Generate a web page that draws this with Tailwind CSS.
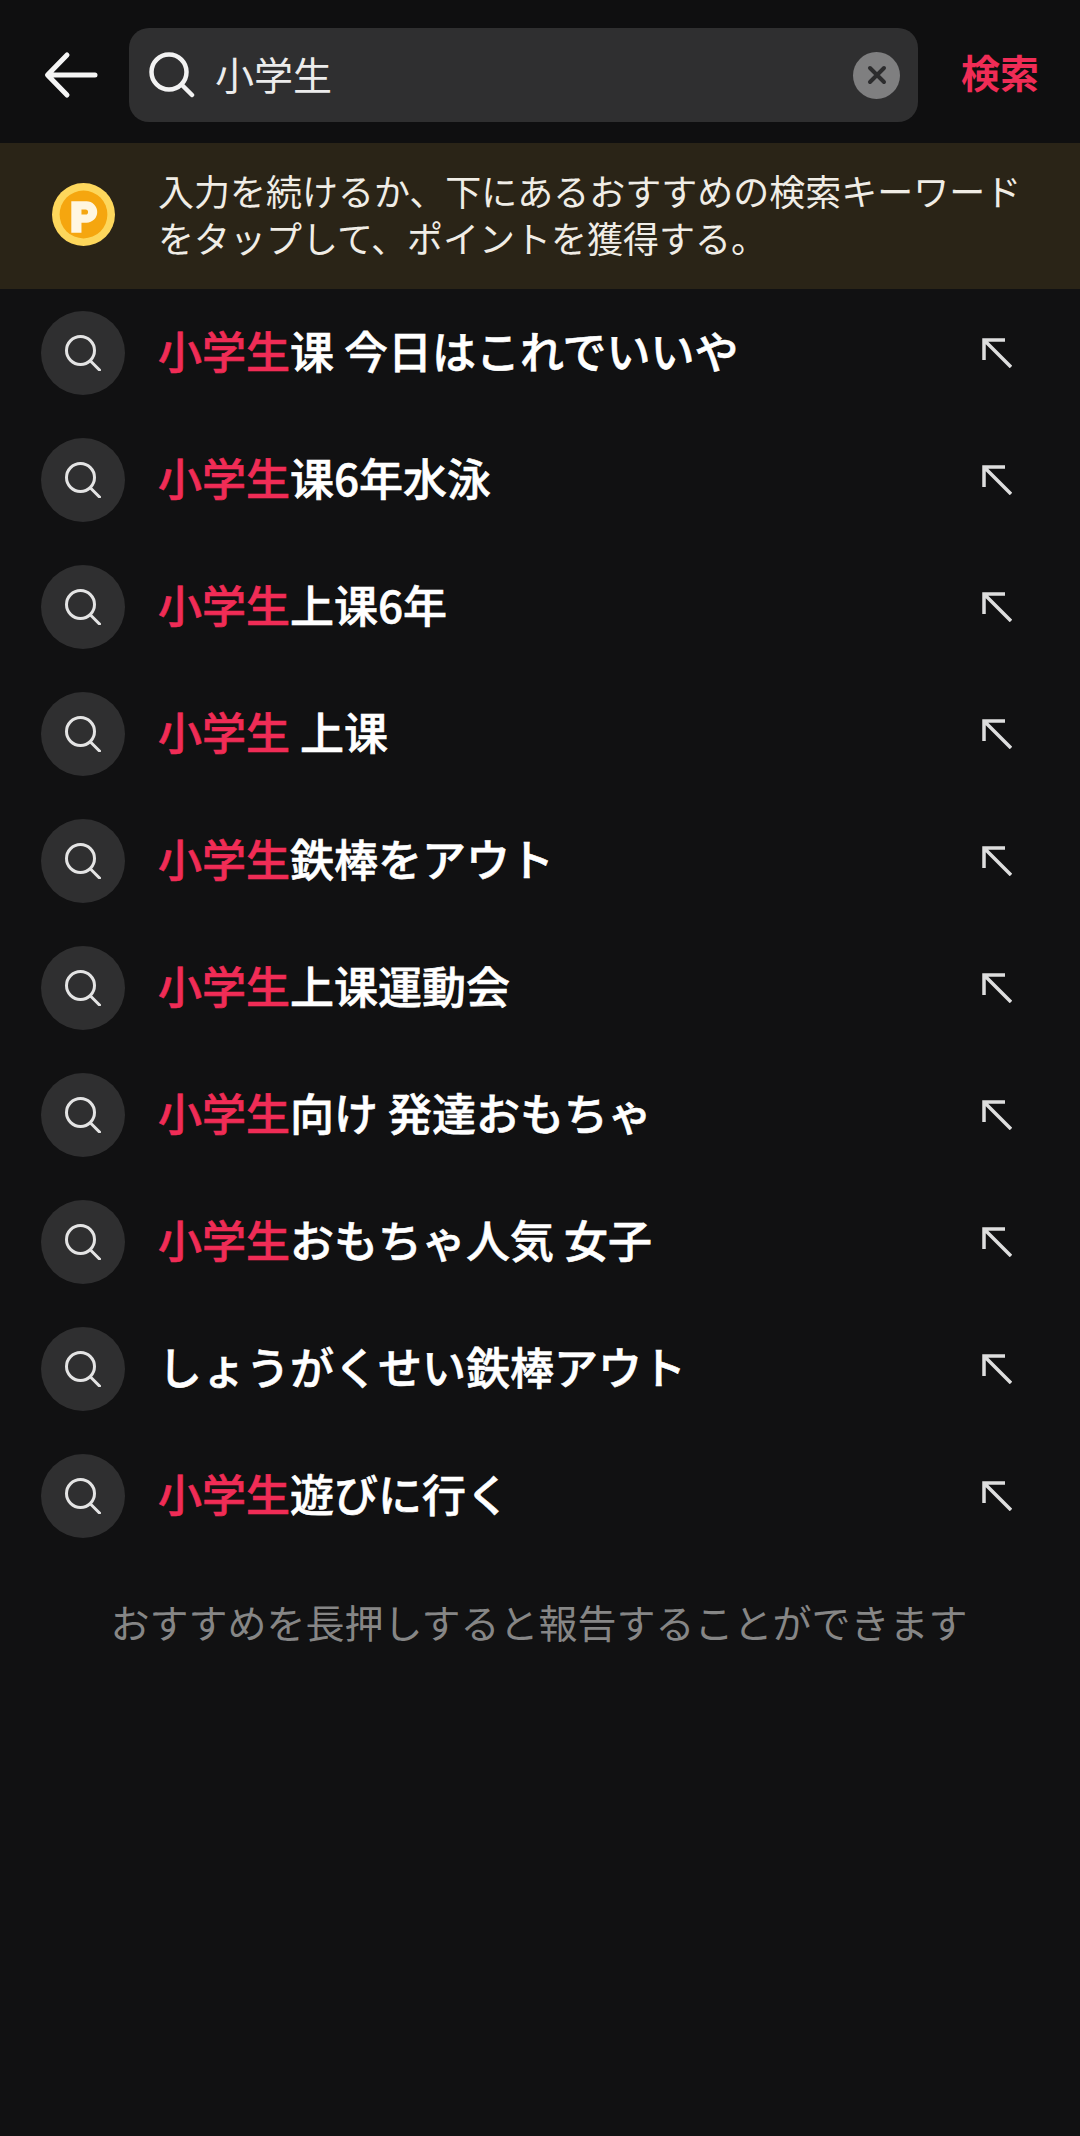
<!doctype html>
<html lang="ja">
<head>
<meta charset="UTF-8">
<title>検索</title>
<script src="https://cdn.jsdelivr.net/npm/@tailwindcss/browser@4"></script>
</head>
<body class="bg-[#111112] font-['Noto_Sans_CJK_JP','Noto_Sans',sans-serif]">
<div class="w-[1080px] h-[2136px] overflow-hidden">

  <!-- search header -->
  <div class="flex items-center h-[143px] bg-[#0f0f10] pt-[7px]">
    <div class="w-[129px] flex pl-[44px] shrink-0">
      <svg class="w-[56px] h-[48px]" viewBox="0 0 56 48" fill="none" stroke="#f5f5f5" stroke-width="5" stroke-linecap="round" stroke-linejoin="round"><path d="M51 24H4M23 4 3.500 24 23 44"/></svg>
    </div>
    <div class="flex items-center w-[789px] h-[94px] rounded-[20px] bg-[#2f2f30] pl-[20px] pr-[18px] shrink-0">
      <svg class="w-[46px] h-[46px] shrink-0" viewBox="0 0 46 46" fill="none" stroke="#f2f2f2" stroke-width="4.500" stroke-linecap="round"><circle cx="20" cy="20" r="17.500"/><path d="M33 33l10 10"/></svg>
      <span class="ml-[20px] text-[39px] leading-none text-[#ececec] -translate-y-[2px]">小学生</span>
      <span class="ml-auto flex items-center justify-center w-[47px] h-[47px] rounded-full bg-[#7f7f80]">
        <svg class="w-[20px] h-[20px]" viewBox="0 0 20 20" fill="none" stroke="#2c2c2d" stroke-width="4" stroke-linecap="round"><path d="M3 3l14 14M17 3 3 17"/></svg>
      </span>
    </div>
    <span class="ml-[43px] text-[39px] leading-none font-bold text-[#f02c56] -translate-y-[4px]">検索</span>
  </div>

  <!-- points banner -->
  <div class="flex items-center h-[146px] bg-[#2a2417] pl-[52px] pb-[4px]">
    <svg class="w-[63px] h-[63px] shrink-0" viewBox="0 0 62 62">
      <circle cx="31" cy="31" r="31" fill="#fdd75c"/>
      <circle cx="31" cy="31" r="23.500" fill="#f5a60f"/>
      <path d="M19 18H34a10.500 10.500 0 0 1 0 21H29V49H19ZM29 26V31H33a2.500 2.500 0 0 0 0-5Z" fill="#fff6e0" fill-rule="evenodd"/>
    </svg>
    <p class="ml-[43px] w-[880px] text-[36px] leading-[47px] text-[#f0ede6]">入力を続けるか、下にあるおすすめの検索キーワードをタップして、ポイントを獲得する。</p>
  </div>

  <!-- suggestions -->
  <ul>
    <li class="flex items-center h-[127px] pl-[41px]">
      <span class="flex items-center justify-center w-[84px] h-[84px] rounded-full bg-[#2f2f30] shrink-0">
        <svg class="w-[36px] h-[36px]" viewBox="0 0 36 36" fill="none" stroke="#e4e4e4" stroke-width="3" stroke-linecap="round"><circle cx="15.500" cy="15.500" r="14"/><path d="M25.500 26l9 9"/></svg>
      </span>
      <span class="ml-[33px] text-[44px] leading-none font-medium text-white whitespace-nowrap -translate-y-[3px] [-webkit-text-stroke:0.6px]"><span class="text-[#f02c56]">小学生</span>课 今日はこれでいいや</span>
      <svg class="ml-auto mr-[68px] w-[30px] h-[30px] shrink-0" viewBox="0 0 30 30" fill="none" stroke="#dedede" stroke-width="3.500"><path d="M2 22V2H23M2 2 29 29"/></svg>
    </li>
    <li class="flex items-center h-[127px] pl-[41px]">
      <span class="flex items-center justify-center w-[84px] h-[84px] rounded-full bg-[#2f2f30] shrink-0">
        <svg class="w-[36px] h-[36px]" viewBox="0 0 36 36" fill="none" stroke="#e4e4e4" stroke-width="3" stroke-linecap="round"><circle cx="15.500" cy="15.500" r="14"/><path d="M25.500 26l9 9"/></svg>
      </span>
      <span class="ml-[33px] text-[44px] leading-none font-medium text-white whitespace-nowrap -translate-y-[3px] [-webkit-text-stroke:0.6px]"><span class="text-[#f02c56]">小学生</span>课6年水泳</span>
      <svg class="ml-auto mr-[68px] w-[30px] h-[30px] shrink-0" viewBox="0 0 30 30" fill="none" stroke="#dedede" stroke-width="3.500"><path d="M2 22V2H23M2 2 29 29"/></svg>
    </li>
    <li class="flex items-center h-[127px] pl-[41px]">
      <span class="flex items-center justify-center w-[84px] h-[84px] rounded-full bg-[#2f2f30] shrink-0">
        <svg class="w-[36px] h-[36px]" viewBox="0 0 36 36" fill="none" stroke="#e4e4e4" stroke-width="3" stroke-linecap="round"><circle cx="15.500" cy="15.500" r="14"/><path d="M25.500 26l9 9"/></svg>
      </span>
      <span class="ml-[33px] text-[44px] leading-none font-medium text-white whitespace-nowrap -translate-y-[3px] [-webkit-text-stroke:0.6px]"><span class="text-[#f02c56]">小学生</span>上课6年</span>
      <svg class="ml-auto mr-[68px] w-[30px] h-[30px] shrink-0" viewBox="0 0 30 30" fill="none" stroke="#dedede" stroke-width="3.500"><path d="M2 22V2H23M2 2 29 29"/></svg>
    </li>
    <li class="flex items-center h-[127px] pl-[41px]">
      <span class="flex items-center justify-center w-[84px] h-[84px] rounded-full bg-[#2f2f30] shrink-0">
        <svg class="w-[36px] h-[36px]" viewBox="0 0 36 36" fill="none" stroke="#e4e4e4" stroke-width="3" stroke-linecap="round"><circle cx="15.500" cy="15.500" r="14"/><path d="M25.500 26l9 9"/></svg>
      </span>
      <span class="ml-[33px] text-[44px] leading-none font-medium text-white whitespace-nowrap -translate-y-[3px] [-webkit-text-stroke:0.6px]"><span class="text-[#f02c56]">小学生</span> 上课</span>
      <svg class="ml-auto mr-[68px] w-[30px] h-[30px] shrink-0" viewBox="0 0 30 30" fill="none" stroke="#dedede" stroke-width="3.500"><path d="M2 22V2H23M2 2 29 29"/></svg>
    </li>
    <li class="flex items-center h-[127px] pl-[41px]">
      <span class="flex items-center justify-center w-[84px] h-[84px] rounded-full bg-[#2f2f30] shrink-0">
        <svg class="w-[36px] h-[36px]" viewBox="0 0 36 36" fill="none" stroke="#e4e4e4" stroke-width="3" stroke-linecap="round"><circle cx="15.500" cy="15.500" r="14"/><path d="M25.500 26l9 9"/></svg>
      </span>
      <span class="ml-[33px] text-[44px] leading-none font-medium text-white whitespace-nowrap -translate-y-[3px] [-webkit-text-stroke:0.6px]"><span class="text-[#f02c56]">小学生</span>鉄棒をアウト</span>
      <svg class="ml-auto mr-[68px] w-[30px] h-[30px] shrink-0" viewBox="0 0 30 30" fill="none" stroke="#dedede" stroke-width="3.500"><path d="M2 22V2H23M2 2 29 29"/></svg>
    </li>
    <li class="flex items-center h-[127px] pl-[41px]">
      <span class="flex items-center justify-center w-[84px] h-[84px] rounded-full bg-[#2f2f30] shrink-0">
        <svg class="w-[36px] h-[36px]" viewBox="0 0 36 36" fill="none" stroke="#e4e4e4" stroke-width="3" stroke-linecap="round"><circle cx="15.500" cy="15.500" r="14"/><path d="M25.500 26l9 9"/></svg>
      </span>
      <span class="ml-[33px] text-[44px] leading-none font-medium text-white whitespace-nowrap -translate-y-[3px] [-webkit-text-stroke:0.6px]"><span class="text-[#f02c56]">小学生</span>上课運動会</span>
      <svg class="ml-auto mr-[68px] w-[30px] h-[30px] shrink-0" viewBox="0 0 30 30" fill="none" stroke="#dedede" stroke-width="3.500"><path d="M2 22V2H23M2 2 29 29"/></svg>
    </li>
    <li class="flex items-center h-[127px] pl-[41px]">
      <span class="flex items-center justify-center w-[84px] h-[84px] rounded-full bg-[#2f2f30] shrink-0">
        <svg class="w-[36px] h-[36px]" viewBox="0 0 36 36" fill="none" stroke="#e4e4e4" stroke-width="3" stroke-linecap="round"><circle cx="15.500" cy="15.500" r="14"/><path d="M25.500 26l9 9"/></svg>
      </span>
      <span class="ml-[33px] text-[44px] leading-none font-medium text-white whitespace-nowrap -translate-y-[3px] [-webkit-text-stroke:0.6px]"><span class="text-[#f02c56]">小学生</span>向け 発達おもちゃ</span>
      <svg class="ml-auto mr-[68px] w-[30px] h-[30px] shrink-0" viewBox="0 0 30 30" fill="none" stroke="#dedede" stroke-width="3.500"><path d="M2 22V2H23M2 2 29 29"/></svg>
    </li>
    <li class="flex items-center h-[127px] pl-[41px]">
      <span class="flex items-center justify-center w-[84px] h-[84px] rounded-full bg-[#2f2f30] shrink-0">
        <svg class="w-[36px] h-[36px]" viewBox="0 0 36 36" fill="none" stroke="#e4e4e4" stroke-width="3" stroke-linecap="round"><circle cx="15.500" cy="15.500" r="14"/><path d="M25.500 26l9 9"/></svg>
      </span>
      <span class="ml-[33px] text-[44px] leading-none font-medium text-white whitespace-nowrap -translate-y-[3px] [-webkit-text-stroke:0.6px]"><span class="text-[#f02c56]">小学生</span>おもちゃ人気 女子</span>
      <svg class="ml-auto mr-[68px] w-[30px] h-[30px] shrink-0" viewBox="0 0 30 30" fill="none" stroke="#dedede" stroke-width="3.500"><path d="M2 22V2H23M2 2 29 29"/></svg>
    </li>
    <li class="flex items-center h-[127px] pl-[41px]">
      <span class="flex items-center justify-center w-[84px] h-[84px] rounded-full bg-[#2f2f30] shrink-0">
        <svg class="w-[36px] h-[36px]" viewBox="0 0 36 36" fill="none" stroke="#e4e4e4" stroke-width="3" stroke-linecap="round"><circle cx="15.500" cy="15.500" r="14"/><path d="M25.500 26l9 9"/></svg>
      </span>
      <span class="ml-[33px] text-[44px] leading-none font-medium text-white whitespace-nowrap -translate-y-[3px] [-webkit-text-stroke:0.6px]">しょうがくせい鉄棒アウト</span>
      <svg class="ml-auto mr-[68px] w-[30px] h-[30px] shrink-0" viewBox="0 0 30 30" fill="none" stroke="#dedede" stroke-width="3.500"><path d="M2 22V2H23M2 2 29 29"/></svg>
    </li>
    <li class="flex items-center h-[127px] pl-[41px]">
      <span class="flex items-center justify-center w-[84px] h-[84px] rounded-full bg-[#2f2f30] shrink-0">
        <svg class="w-[36px] h-[36px]" viewBox="0 0 36 36" fill="none" stroke="#e4e4e4" stroke-width="3" stroke-linecap="round"><circle cx="15.500" cy="15.500" r="14"/><path d="M25.500 26l9 9"/></svg>
      </span>
      <span class="ml-[33px] text-[44px] leading-none font-medium text-white whitespace-nowrap -translate-y-[3px] [-webkit-text-stroke:0.6px]"><span class="text-[#f02c56]">小学生</span>遊びに行く</span>
      <svg class="ml-auto mr-[68px] w-[30px] h-[30px] shrink-0" viewBox="0 0 30 30" fill="none" stroke="#dedede" stroke-width="3.500"><path d="M2 22V2H23M2 2 29 29"/></svg>
    </li>
  </ul>

  <p class="mt-[39px] -ml-[2px] text-center text-[39px] leading-[46px] text-[#868686]">おすすめを長押しすると報告することができます</p>
</div>
</body>
</html>
